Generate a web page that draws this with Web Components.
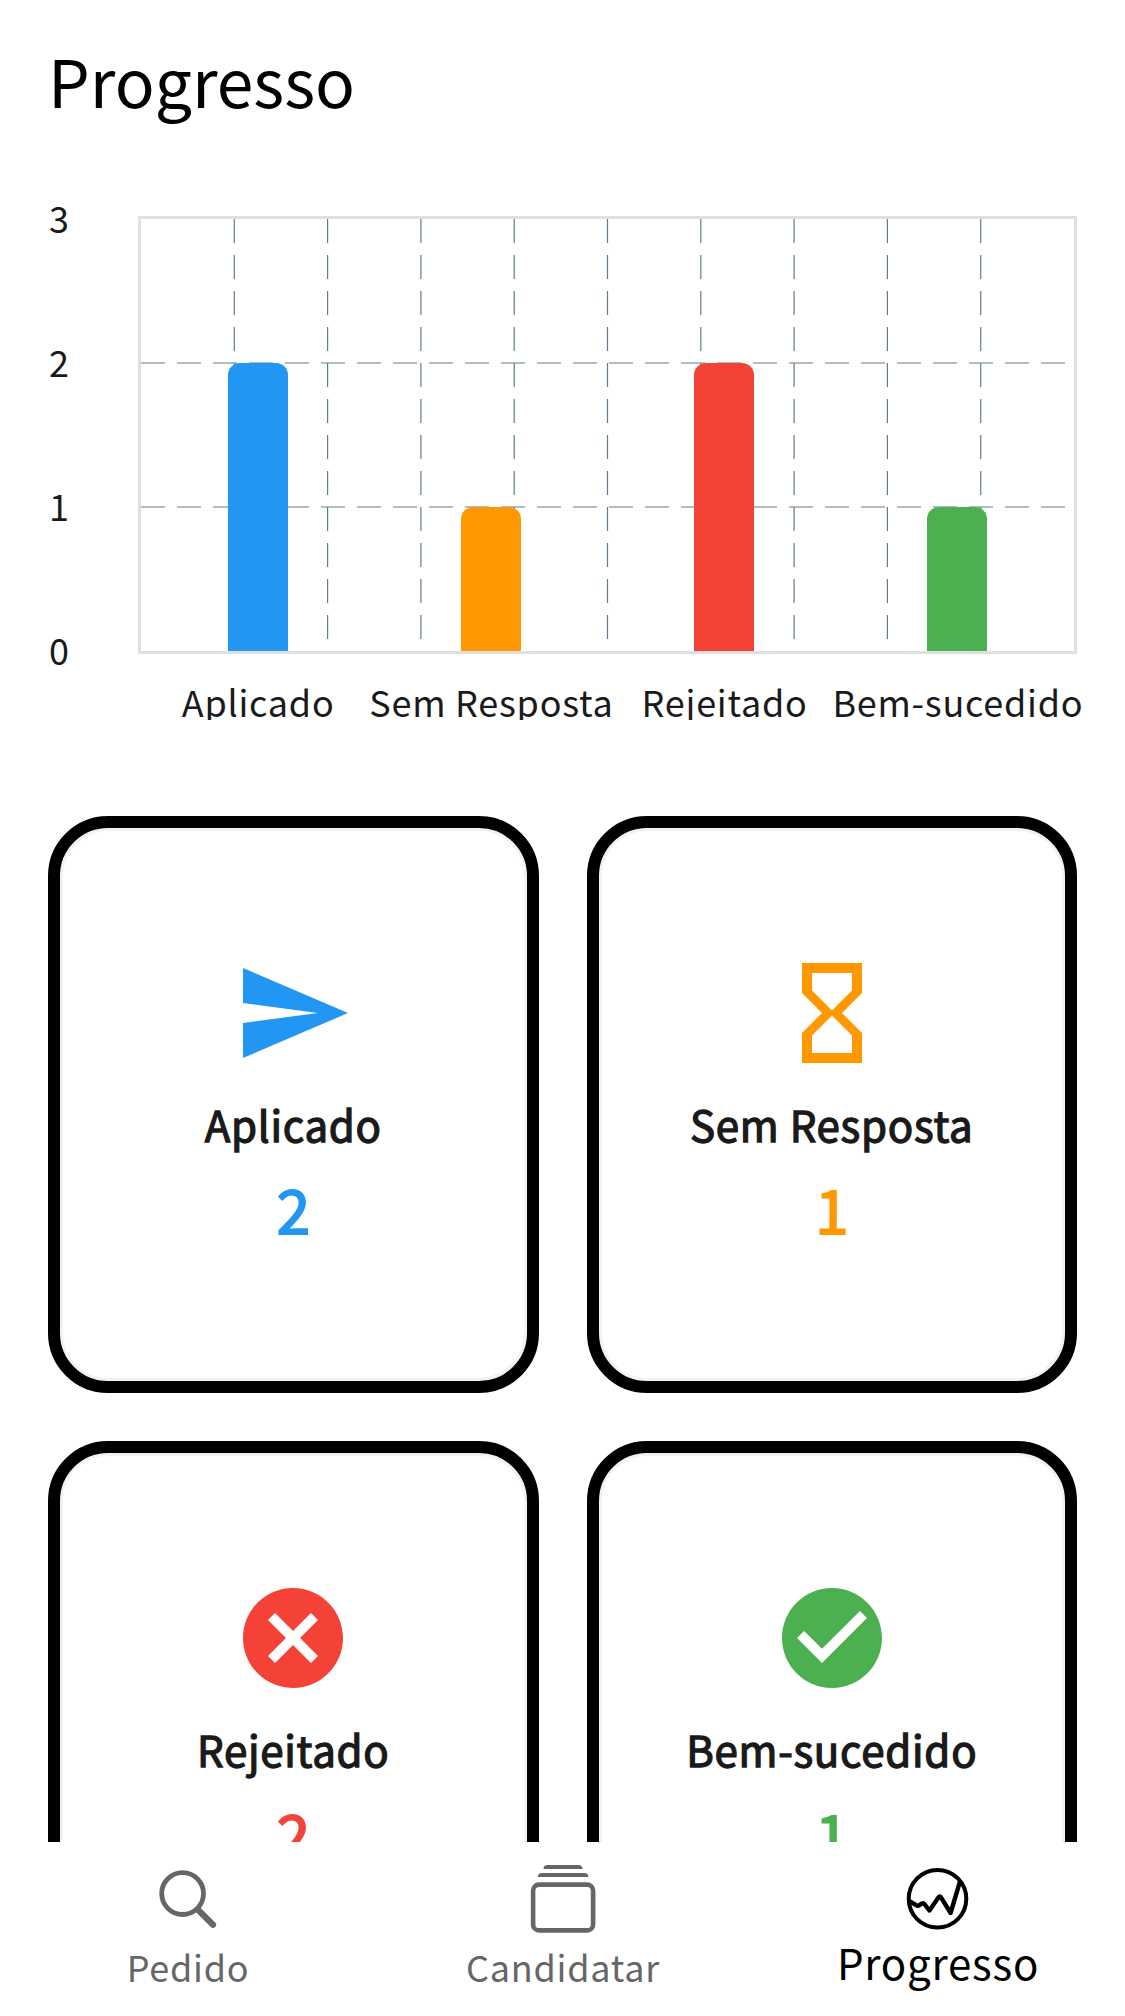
<!DOCTYPE html>
<html lang="pt">
<head>
<meta charset="utf-8">
<title>Progresso</title>
<style>
  html, body { margin: 0; background: #fff; }
  body { font-family: "Noto Sans CJK SC", "Noto Sans", sans-serif; color: #1a1a1a; }
</style>
</head>
<body>
<progress-app>
  <page-title>Progresso</page-title>
  <bar-chart max="3">
    <chart-bar value="2" color="#2196f3">Aplicado</chart-bar>
    <chart-bar value="1" color="#ff9800">Sem Resposta</chart-bar>
    <chart-bar value="2" color="#f44336">Rejeitado</chart-bar>
    <chart-bar value="1" color="#4caf50">Bem-sucedido</chart-bar>
  </bar-chart>
  <card-grid>
    <status-card icon="send" count="2" color="#2196f3">Aplicado</status-card>
    <status-card icon="hourglass" count="1" color="#ff9800">Sem Resposta</status-card>
    <status-card icon="cancel" count="2" color="#f44336">Rejeitado</status-card>
    <status-card icon="check" count="1" color="#4caf50">Bem-sucedido</status-card>
  </card-grid>
  <nav-item slot="nav" icon="search">Pedido</nav-item>
  <nav-item slot="nav" icon="stack">Candidatar</nav-item>
  <nav-item slot="nav" icon="trend" active>Progresso</nav-item>
</progress-app>

<script>
const ICONS = {
  send: '<path d="M2.01 21L23 12 2.01 3 2 10l15 2-15 2z"/>',
  hourglass: '<path d="M6 2v6h.01L6 8.01 10 12l-4 4 .01.01H6V22h12v-5.99h-.01L18 16l-4-4 4-3.99-.01-.01H18V2H6zm10 14.5V20H8v-3.5l4-4 4 4zm-4-5l-4-4V4h8v3.5l-4 4z"/>',
  cancel: '<path d="M12 2C6.47 2 2 6.47 2 12s4.47 10 10 10 10-4.47 10-10S17.53 2 12 2zm5 13.59L15.59 17 12 13.41 8.41 17 7 15.59 10.59 12 7 8.41 8.41 7 12 10.59 15.59 7 17 8.41 13.41 12 17 15.59z"/>',
  check: '<path d="M12 2C6.48 2 2 6.48 2 12s4.48 10 10 10 10-4.48 10-10S17.52 2 12 2zm-2 15l-5-5 1.41-1.41L10 14.17l7.59-7.59L19 8l-9 9z"/>',
  search: '<g fill="none" stroke="currentColor" stroke-linecap="round"><circle cx="30.6" cy="33.6" r="20.9" stroke-width="4.8"/><path d="M45.5 49.2L61 64.8" stroke-width="6.2"/></g>',
  stack: '<rect x="6.1" y="24.6" width="60" height="45.8" rx="6" fill="none" stroke="currentColor" stroke-width="4.6"/><path d="M10.8 17c0-2.4 1.6-4 4-4h42.7c2.4 0 4 1.6 4 4zM16.5 9c0-2.4 1.6-4 4-4h31c2.4 0 4 1.6 4 4z"/>',
  trend: '<g fill="none" stroke="currentColor" stroke-width="4" stroke-linejoin="round" stroke-linecap="round"><circle cx="35.5" cy="38.8" r="28.8"/><path d="M8.4 41.7L14.4 45.4Q16 46.2 17.4 45.2L20.1 43.4Q21.4 42.7 22.4 44L27.4 50.5 36.4 37.4Q37.7 35.4 39 37.4L48.6 53 57.7 22.3" stroke-width="4.4"/></g>'
};

class BaseElement extends HTMLElement {
  connectedCallback() {
    if (this.shadowRoot) return;
    this.attachShadow({ mode: 'open' }).innerHTML = this.render();
  }
}

customElements.define('progress-app', class extends BaseElement {
  render() {
    return `<style>
      :host { display: flex; flex-direction: column; height: 2016px; width: 1125px; overflow: hidden; }
      main { height: 1842px; flex: none; box-sizing: border-box; padding: 31px 48px 0; overflow: hidden; }
      nav { flex: 1; display: flex; }
    </style><main><slot></slot></main><nav><slot name="nav"></slot></nav>`;
  }
});

customElements.define('page-title', class extends BaseElement {
  render() {
    return `<style>
      :host { display: block; height: 160px; }
      h1 { margin: 0; font-size: 66px; font-weight: 400; line-height: 96px; color: #000; }
    </style><h1><slot></slot></h1>`;
  }
});

customElements.define('chart-bar', class extends BaseElement {
  render() {
    return `<style>
      :host { flex: 1 1 0; min-width: 0; display: flex; justify-content: center; white-space: nowrap; }
      span { padding-left: 1px; }
    </style><span><slot></slot></span>`;
  }
});

customElements.define('bar-chart', class extends BaseElement {
  render() {
    const max = +this.getAttribute('max'), W = 933, H = 432;
    const items = [...this.querySelectorAll('chart-bar')];
    let grid = '', ticks = '';
    for (let i = 1; i < 10; i++) grid += `<path d="M${i * W / 10} 0V${H}"/>`;
    for (let i = 1; i < max; i++) grid += `<path d="M0 ${i * H / max}H${W}"/>`;
    for (let i = max; i >= 0; i--) ticks += `<span>${i}</span>`;
    const bars = items.map(b => `<div class="col"><div class="bar" style="height:${b.getAttribute('value') / max * 100}%;background:${b.getAttribute('color')}"></div></div>`).join('');
    return `<style>
      :host { display: block; height: 529px; font-size: 36px; letter-spacing: .75px; line-height: 52px; }
      .top { display: flex; height: 484px; }
      .ticks { box-sizing: border-box; width: 90px; padding-left: 1px; display: flex; flex-direction: column; justify-content: space-between; }
      .plot { box-sizing: border-box; width: 939px; height: 438px; margin-top: 25px; border: 3px solid #e0e0e0; display: grid; }
      .plot > * { grid-area: 1 / 1; }
      svg { display: block; }
      .bars { display: flex; height: 432px; }
      .col { flex: 1; display: flex; justify-content: center; align-items: flex-end; }
      .bar { width: 60px; border-radius: 12px 12px 0 0; }
      .labels { display: flex; height: 45px; margin: 0 3px 0 93px; overflow-x: visible; overflow-y: clip; }
    </style>
    <div class="top"><div class="ticks">${ticks}</div>
      <div class="plot">
        <svg width="${W}" height="${H}" fill="none" stroke="#607d8b" stroke-width="1.2" stroke-dasharray="24 12">${grid}</svg>
        <div class="bars">${bars}</div>
      </div></div>
    <div class="labels"><slot></slot></div>`;
  }
});

customElements.define('card-grid', class extends BaseElement {
  render() {
    return `<style>
      :host { display: grid; grid-template-columns: 1fr 1fr; grid-auto-rows: 577px; gap: 48px; margin-top: 96px; }
    </style><slot></slot>`;
  }
});

customElements.define('status-card', class extends BaseElement {
  render() {
    return `<style>
      :host { box-sizing: border-box; display: flex; flex-direction: column; align-items: center; padding-top: 125px;
        border: 12px solid #000; border-radius: 60px; box-shadow: inset 0 0 0 3px #eff3f3; letter-spacing: .75px; }
      svg { width: 120px; height: 120px; display: block; flex: none; }
      .name { margin-top: 20px; font-size: 42px; line-height: 61px; -webkit-text-stroke: 1.3px currentColor; }
      .count { margin-top: 10px; padding-left: 1px; font-size: 60px; line-height: 87px; -webkit-text-stroke: 1.9px currentColor; }
      .tint { color: ${this.getAttribute('color')}; }
    </style>
    <svg class="tint" viewBox="0 0 24 24" fill="currentColor">${ICONS[this.getAttribute('icon')]}</svg>
    <div class="name"><slot></slot></div>
    <div class="count tint">${this.getAttribute('count')}</div>`;
  }
});

customElements.define('nav-item', class extends BaseElement {
  render() {
    return `<style>
      :host { flex: 1; display: flex; flex-direction: column; align-items: center; padding-top: 18px; color: #666; letter-spacing: .75px; }
      :host([active]) { color: #000; }
      svg { width: 72px; height: 70px; display: block; overflow: visible; flex: none; }
      span { margin-top: 10px; padding-left: 1px; font-size: 36px; line-height: 52px; }
      :host([active]) span { margin-top: 1px; font-size: 42px; line-height: 61px; }
    </style>
    <svg viewBox="0 0 72 70" fill="currentColor">${ICONS[this.getAttribute('icon')]}</svg>
    <span><slot></slot></span>`;
  }
});
</script>
</body>
</html>
